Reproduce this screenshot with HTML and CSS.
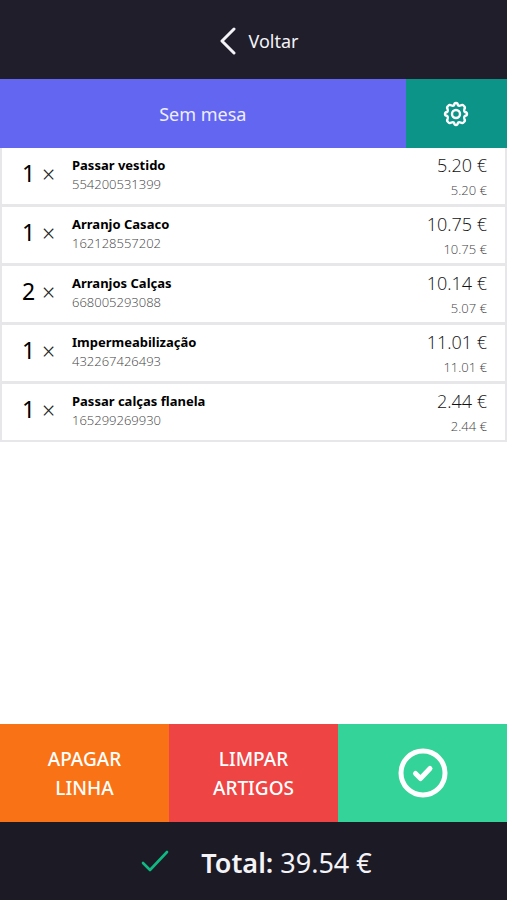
FILE: index.html
```
<!DOCTYPE html>
<html lang="pt">
<head>
    <meta charset="UTF-8">
    <meta name="viewport" content="width=device-width, initial-scale=1.0">
    <title>Sem mesa</title>
    <link rel="stylesheet" href="styles.css">
</head>
<body>
    <header class="topbar">
        <button class="back" type="button">
            <svg width="16" height="28" viewBox="0 0 16 28" fill="none" stroke="currentColor" stroke-width="3" stroke-linecap="round" stroke-linejoin="round">
                <path d="M14 2L2 14l12 12"></path>
            </svg>
            Voltar
        </button>
    </header>

    <div class="table-bar">
        <button class="table-name" type="button">Sem mesa</button>
        <button class="settings" type="button" aria-label="Definições">
            <svg width="26" height="26" viewBox="0 0 26 26" fill="none" stroke="currentColor" stroke-width="2.4" stroke-linejoin="round">
                <path d="M11 4.4Q11.3 2 13 2T15 4.4Q16 5.2 17.6 4.5Q19.6 3.1 20.8 4.9Q22.6 6.2 21.4 8.2Q20.8 10 21.7 11Q24 11.3 24 13T21.7 15Q20.8 16 21.4 17.8Q22.6 19.8 20.8 21.1Q19.6 22.9 17.6 21.5Q16 20.8 15 21.6Q14.7 24 13 24T11 21.6Q10 20.8 8.4 21.5Q6.4 22.9 5.2 21.1Q3.4 19.8 4.6 17.8Q5.2 16 4.3 15Q2 14.7 2 13T4.3 11Q5.2 10 4.6 8.2Q3.4 6.2 5.2 4.9Q6.4 3.1 8.4 4.5Q10 5.2 11 4.4z"></path>
                <circle cx="13" cy="13" r="4"></circle>
            </svg>
        </button>
    </div>

    <main class="items">
        <ul class="item-list">
            <li class="item">
                <span class="qty">1</span>
                <span class="times">×</span>
                <div class="info">
                    <strong class="name">Passar vestido</strong>
                    <span class="code">554200531399</span>
                </div>
                <div class="prices">
                    <span class="price">5.20 €</span>
                    <span class="unit">5.20 €</span>
                </div>
            </li>
            <li class="item">
                <span class="qty">1</span>
                <span class="times">×</span>
                <div class="info">
                    <strong class="name">Arranjo Casaco</strong>
                    <span class="code">162128557202</span>
                </div>
                <div class="prices">
                    <span class="price">10.75 €</span>
                    <span class="unit">10.75 €</span>
                </div>
            </li>
            <li class="item">
                <span class="qty">2</span>
                <span class="times">×</span>
                <div class="info">
                    <strong class="name">Arranjos Calças</strong>
                    <span class="code">668005293088</span>
                </div>
                <div class="prices">
                    <span class="price">10.14 €</span>
                    <span class="unit">5.07 €</span>
                </div>
            </li>
            <li class="item">
                <span class="qty">1</span>
                <span class="times">×</span>
                <div class="info">
                    <strong class="name">Impermeabilização</strong>
                    <span class="code">432267426493</span>
                </div>
                <div class="prices">
                    <span class="price">11.01 €</span>
                    <span class="unit">11.01 €</span>
                </div>
            </li>
            <li class="item">
                <span class="qty">1</span>
                <span class="times">×</span>
                <div class="info">
                    <strong class="name">Passar calças flanela</strong>
                    <span class="code">165299269930</span>
                </div>
                <div class="prices">
                    <span class="price">2.44 €</span>
                    <span class="unit">2.44 €</span>
                </div>
            </li>
        </ul>
    </main>

    <div class="actions">
        <button class="action delete" type="button">APAGAR<br>LINHA</button>
        <button class="action clear" type="button">LIMPAR<br>ARTIGOS</button>
        <button class="action confirm" type="button" aria-label="Confirmar">
            <svg width="50" height="50" viewBox="0 0 50 50" fill="none" stroke="currentColor" stroke-width="5" stroke-linecap="round" stroke-linejoin="round">
                <circle cx="25" cy="25" r="22"></circle>
                <path d="M17.5 25.5l5 5 9.5-10"></path>
            </svg>
        </button>
    </div>

    <footer class="total">
        <svg width="28" height="22" viewBox="0 0 28 22" fill="none" stroke="currentColor" stroke-width="2.6" stroke-linecap="round" stroke-linejoin="round">
            <path d="M2 13l7 7L26 2"></path>
        </svg>
        <p><strong>Total:</strong> 39.54 €</p>
    </footer>
</body>
</html>
```
FILE: styles.css
```
* {
    box-sizing: border-box;
}

body {
    margin: 0;
    min-height: 100vh;
    display: flex;
    flex-direction: column;
    font-family: "Segoe UI", "Noto Sans", "Open Sans", sans-serif;
    background-color: #fff;
    color: #000;
}

button {
    border: none;
    padding: 0;
    margin: 0;
    background: none;
    color: #fff;
    font: inherit;
    cursor: pointer;
}

.topbar {
    display: flex;
    justify-content: center;
    padding: 20px;
    background-color: #201e2b;
}

.back {
    display: flex;
    align-items: center;
    gap: 12px;
    height: 39px;
    padding: 2px 0 0 12px;
    font-size: 18px;
    color: #f3f3f8;
}

.table-bar {
    display: grid;
    grid-template-columns: 4fr 1fr;
    height: 69px;
}

.table-name {
    background-color: #6366f1;
    font-size: 18px;
    color: #eeeeff;
}

.settings,
.confirm {
    display: flex;
    align-items: center;
    justify-content: center;
}

.settings {
    background-color: #0d9488;
}

.items {
    flex: 1;
}

.item-list {
    list-style: none;
    margin: 0;
    padding: 0 2px 2px;
    display: flex;
    flex-direction: column;
    gap: 3px;
    background-color: #e7e7e9;
}

.item {
    display: flex;
    align-items: center;
    height: 56px;
    padding: 0 18px 0 20px;
    background-color: #fff;
}

.qty {
    width: 20px;
    font-size: 23px;
    line-height: 32px;
    padding-bottom: 6px;
}

.times {
    width: 30px;
    font-size: 23px;
    font-weight: 300;
    line-height: 24px;
    padding-bottom: 4px;
    color: #222;
}

.info,
.prices {
    display: flex;
    flex-direction: column;
}

.info {
    flex: 1;
    padding-bottom: 4px;
}

.name {
    font-size: 13px;
    line-height: 20px;
}

.code {
    font-family: "Open Sans", sans-serif;
    font-weight: 300;
    font-size: 13px;
    line-height: 19px;
    color: #444;
}

.prices {
    font-family: "Open Sans", sans-serif;
    font-weight: 300;
    text-align: right;
}

.price {
    font-size: 18px;
    line-height: 28px;
    color: #111;
}

.unit {
    font-size: 13px;
    line-height: 22px;
    color: #444;
}

.actions {
    display: grid;
    grid-template-columns: repeat(3, 1fr);
    height: 98px;
}

.action {
    padding-top: 2px;
    font-size: 19px;
    line-height: 29px;
    font-weight: 500;
}

.delete {
    background-color: #f97316;
}

.clear {
    background-color: #ef4444;
}

.confirm {
    padding: 0;
    background-color: #34d399;
}

.total {
    display: flex;
    align-items: center;
    justify-content: center;
    gap: 32px;
    height: 78px;
    padding-left: 6px;
    background-color: #1c1a25;
    color: #10b981;
    font-size: 27px;
}

.total p {
    margin: 0;
    padding-top: 2px;
    color: #f3f3f8;
}

.total strong {
    font-weight: 600;
}
```
